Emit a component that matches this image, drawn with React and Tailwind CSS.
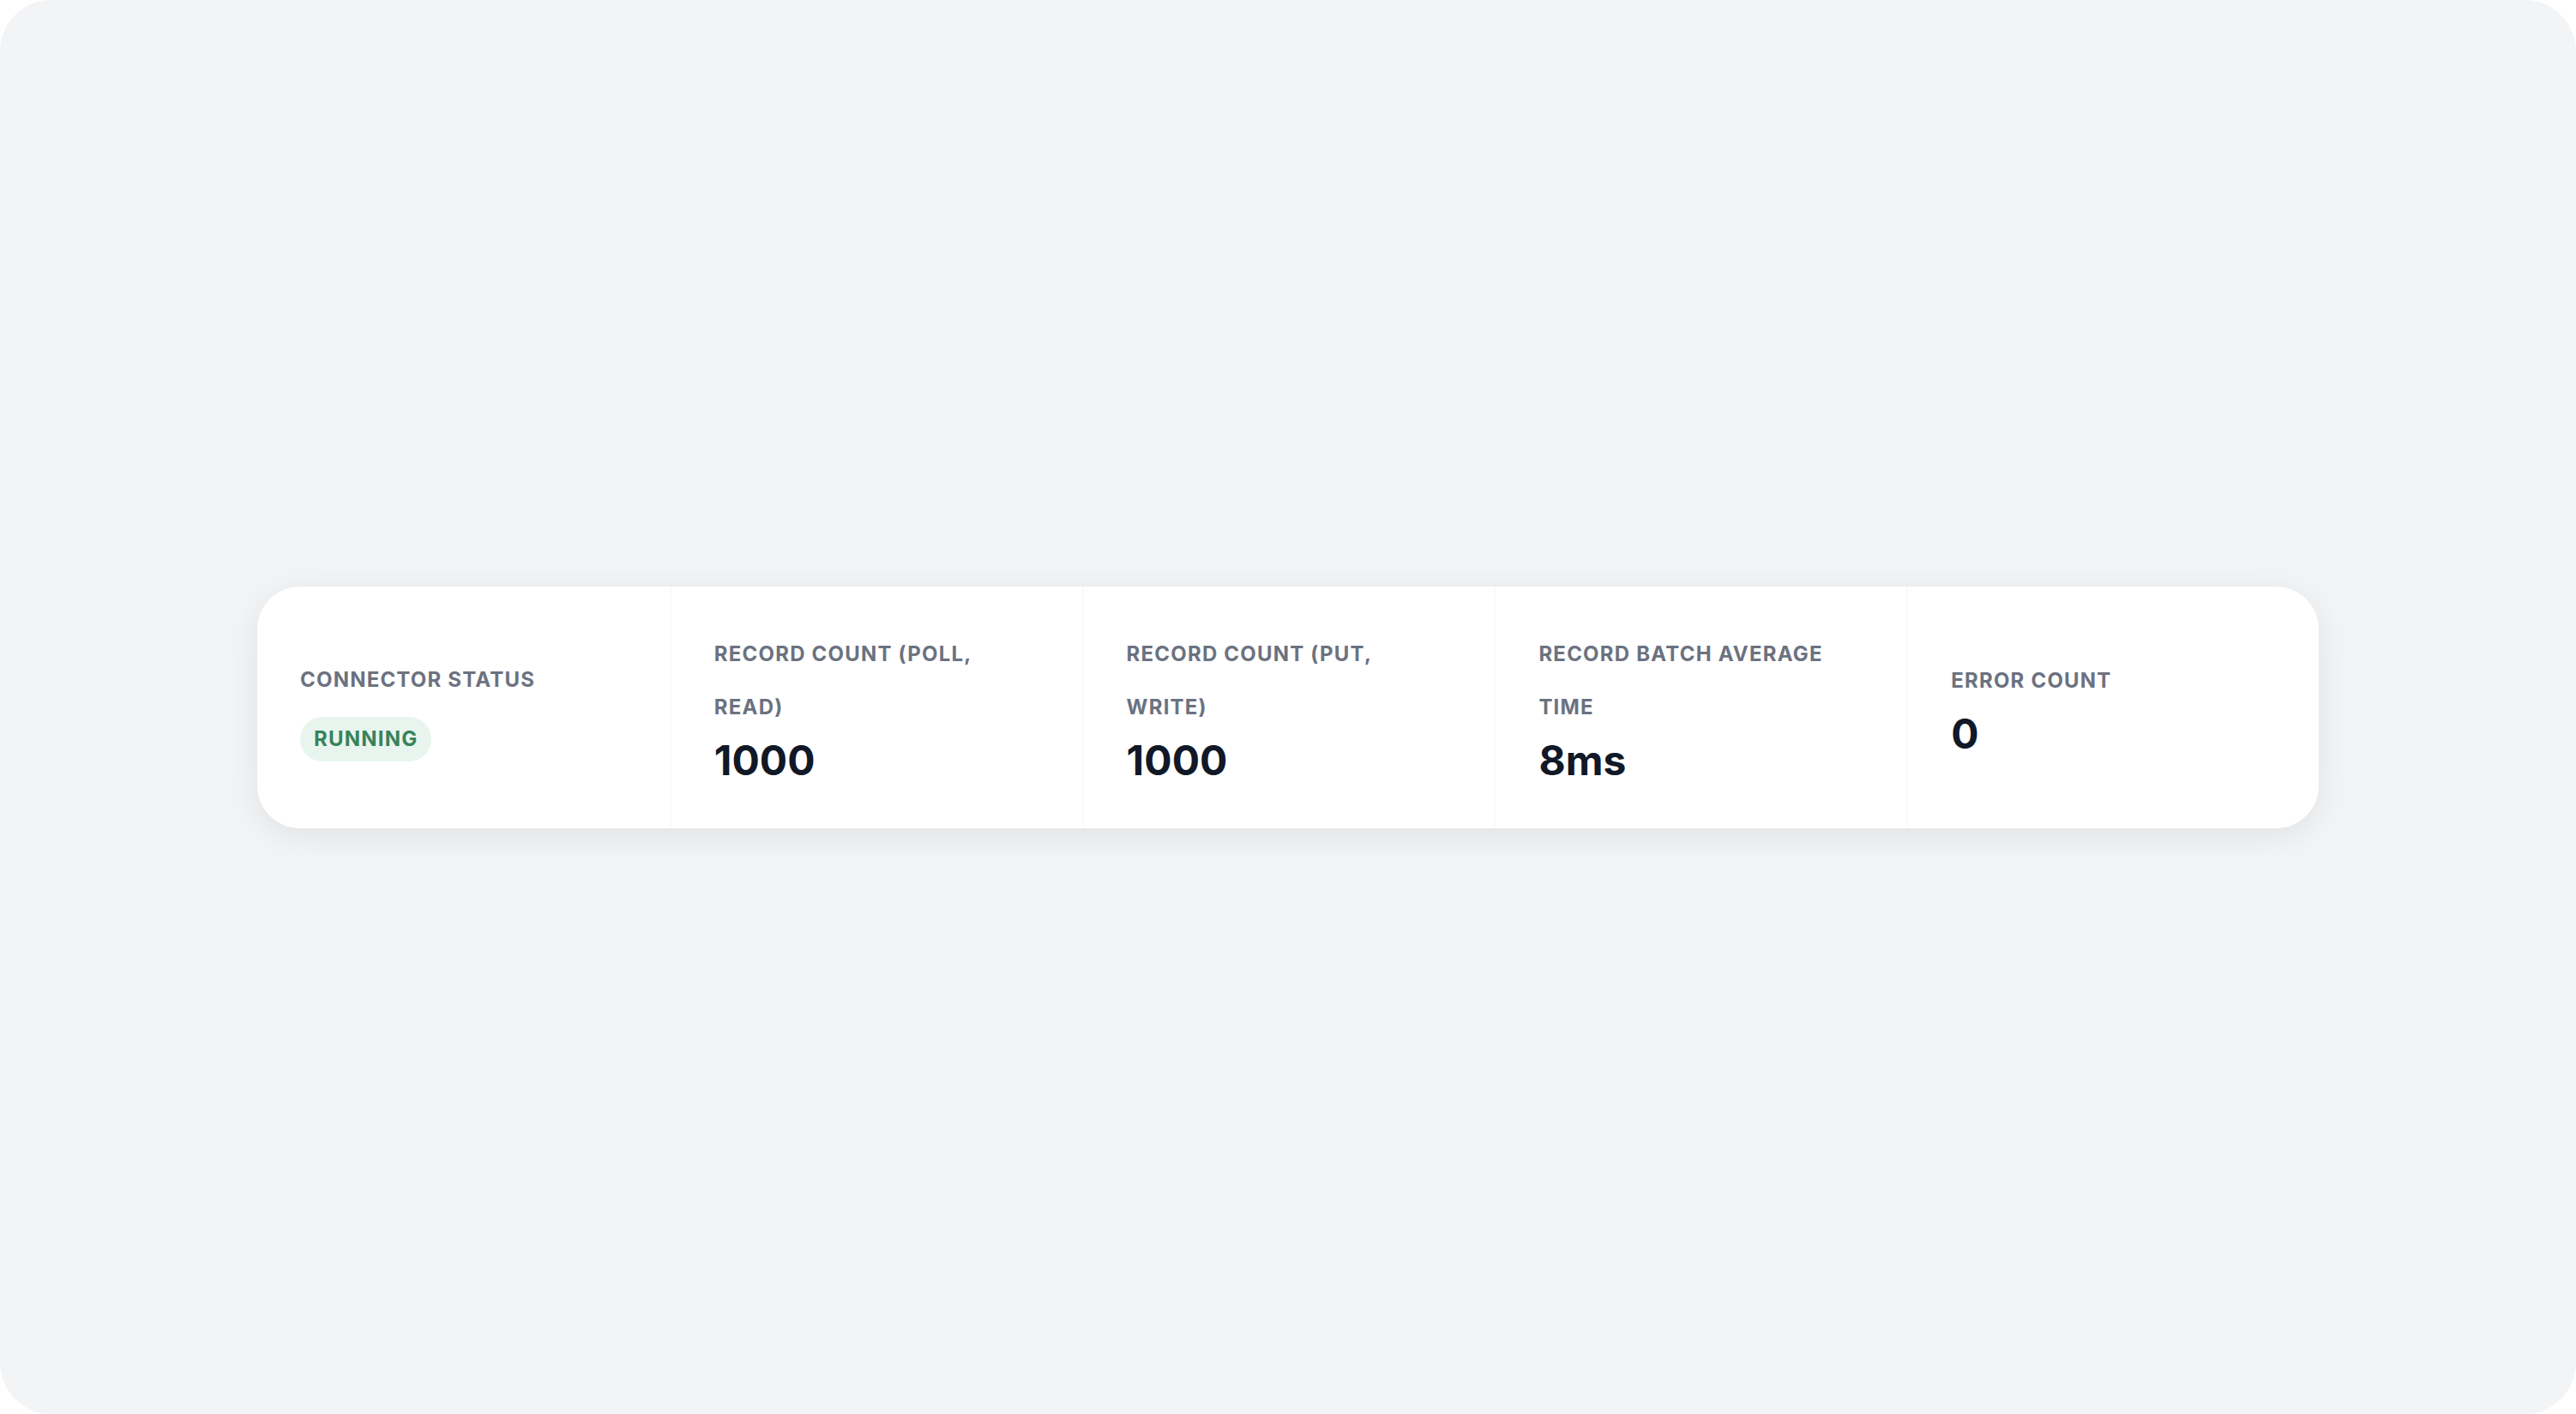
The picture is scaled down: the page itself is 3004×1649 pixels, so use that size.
import React from 'react';

const metrics = [
  { label: 'Record count (poll, read)', value: '1000' },
  { label: 'Record count (put, write)', value: '1000' },
  { label: 'Record batch average time', value: '8ms' },
  { label: 'Error count', value: '0' },
];

const App = () => {
  return (
    <main className="flex min-h-screen items-center rounded-[60px] bg-gray-100 px-[300px] font-['Inter',sans-serif]">
      <dl className="grid w-full grid-cols-5 rounded-[50px] bg-white shadow-[0_8px_40px_rgba(0,0,0,0.08)]">
        <div className="flex flex-col items-start justify-center gap-3 px-[50px] py-12">
          <dt className="text-[24px] leading-[62px] font-bold tracking-wider text-[#6b7280] uppercase">
            Connector status
          </dt>
          <dd className="rounded-full bg-[#e8f5ee] px-4 text-[24px] leading-[52px] font-bold tracking-wider text-[#38825b] uppercase">
            Running
          </dd>
        </div>
        {metrics.map((metric) => (
          <div
            key={metric.label}
            className="flex flex-col items-start justify-center border-l-2 border-[#f9fafb] px-[50px] py-12"
          >
            <dt className="text-[24px] leading-[62px] font-bold tracking-wider text-[#6b7280] uppercase">
              {metric.label}
            </dt>
            <dd className="text-[48px] leading-[62px] font-bold text-[#111827]">{metric.value}</dd>
          </div>
        ))}
      </dl>
    </main>
  );
};

export default App;
